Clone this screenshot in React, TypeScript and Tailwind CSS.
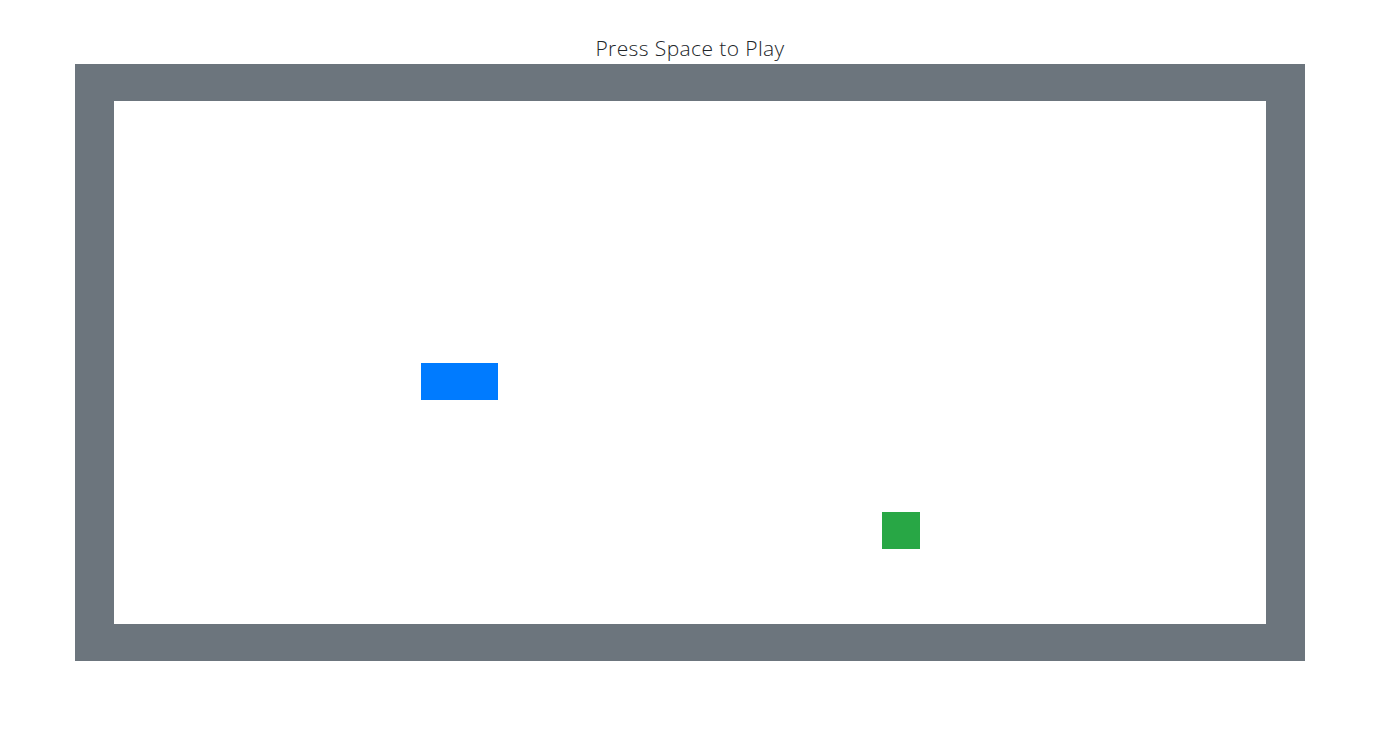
export default function App() {
  const snake = [
    { x: 8, y: 7 },
    { x: 9, y: 7 },
  ];

  return (
    <div className="min-h-screen bg-white font-['Open_Sans',sans-serif] text-[#212529]">
      <div className="ml-[75px] w-[1230px]">
        {/* Status line */}
        <div className="flex h-[64px] items-end justify-center pb-[2px]">
          <p className="text-[21px] leading-[28px] font-light tracking-[0.4px]">Press Space to Play</p>
        </div>

        {/* Board */}
        <div className="h-[597px] border-x-[39px] border-y-[37px] border-[#6c757d]">
          <div className="grid h-full w-full grid-cols-[repeat(30,1fr)] grid-rows-[repeat(14,1fr)]">
            {snake.map((s, i) => (
              <div
                key={i}
                className="bg-[#007bff]"
                style={{ gridColumnStart: s.x + 1, gridRowStart: s.y + 1 }}
              />
            ))}
            <div className="col-start-21 row-start-12 bg-[#28a745]" />
          </div>
        </div>
      </div>
    </div>
  );
}
